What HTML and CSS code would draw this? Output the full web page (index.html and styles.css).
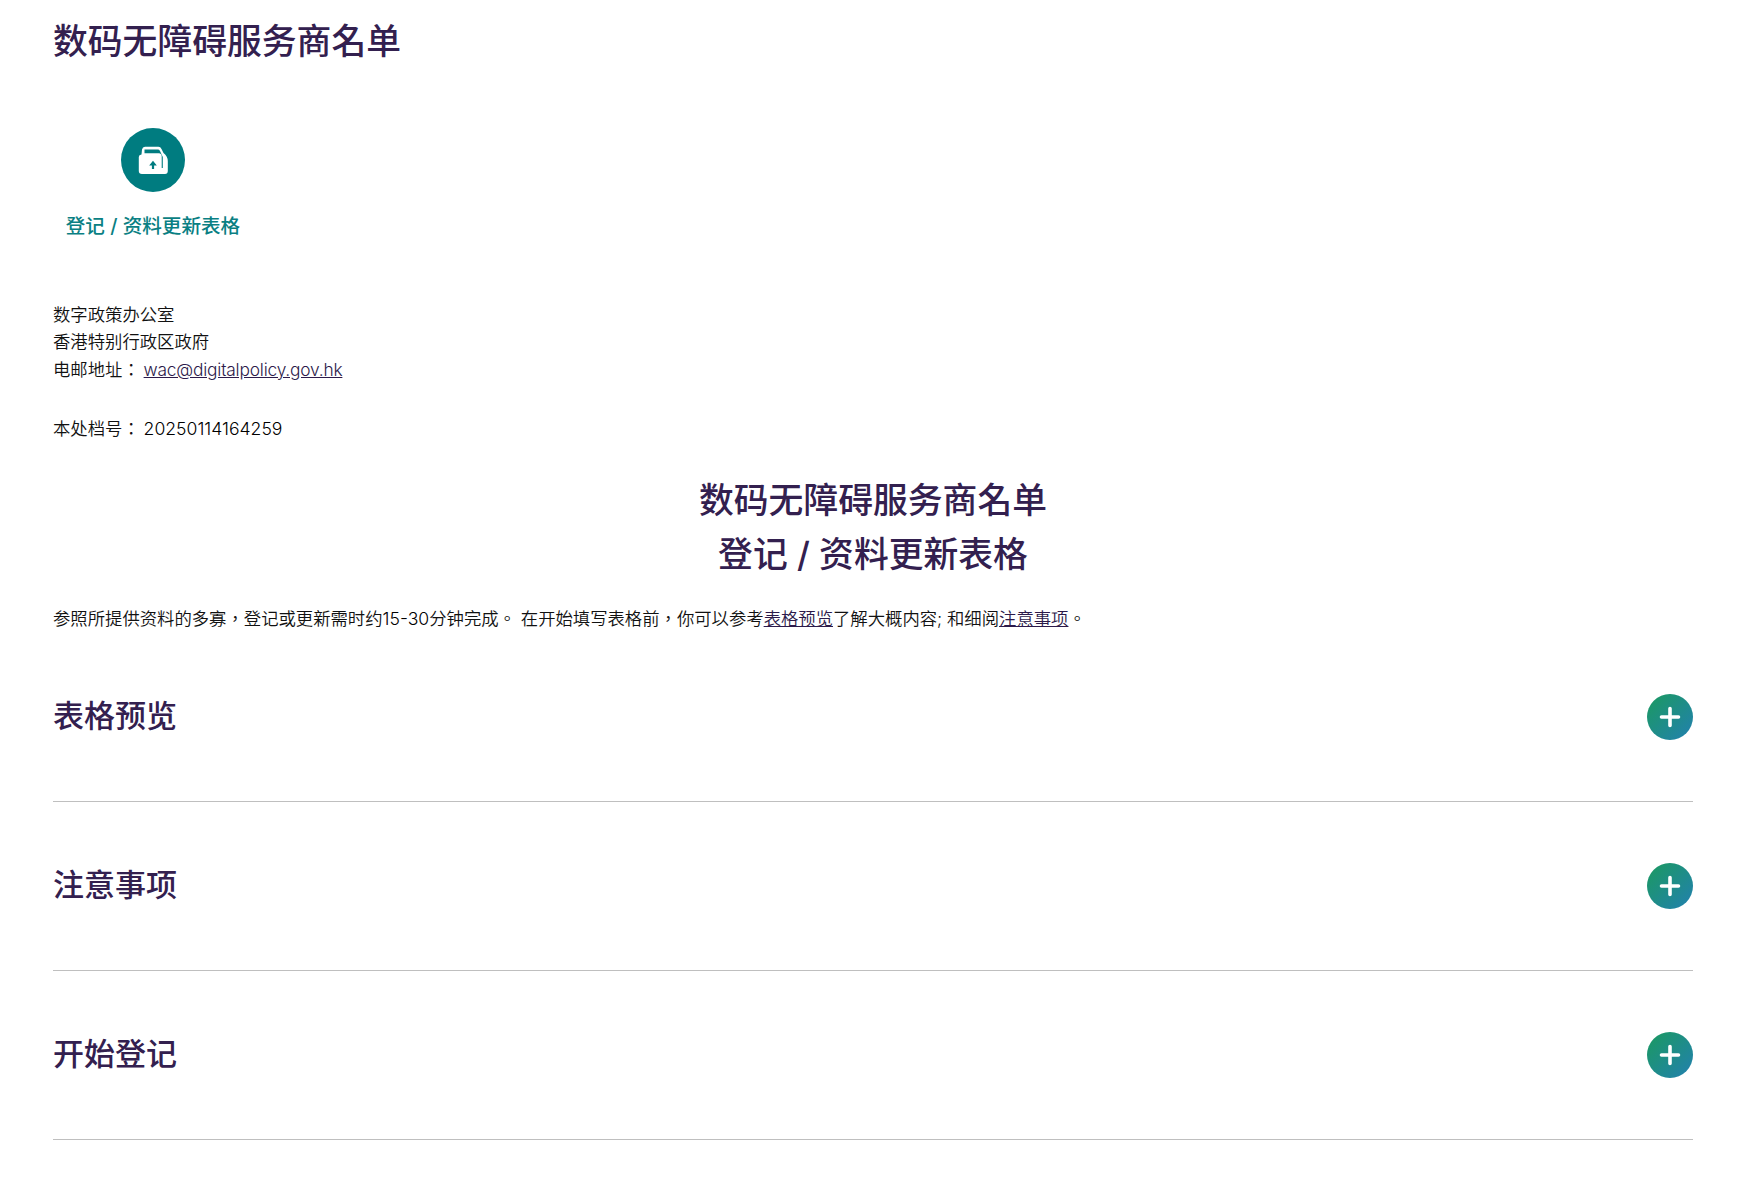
FILE: index.html
```html
<!DOCTYPE html>
<html lang="zh-HK">
<head>
<meta charset="utf-8">
<title>数码无障碍服务商名单</title>
<link rel="stylesheet" href="styles.css">
</head>
<body>
<main class="page">
  <h1 class="page-title">数码无障碍服务商名单</h1>
  <a class="tile" href="#">
    <span class="tile-icon">
      <svg width="32" height="32" viewBox="0 0 32 32"><path fill="#fff" d="M5 5.500Q5.500 2.800 8 2.800H21.500Q23.500 2.800 24.500 5L26.500 9Q30.800 12.500 30.800 17V27Q30.800 30 28 30H5Q1.800 30 1.800 27V13Q1.800 10.800 4.500 10.500Z"/><path fill="#007c80" d="M7.500 9.200V5.400H21.300Q22.400 5.400 23 7L25.800 13V24H24.700V12Q24.300 9.200 22 9.200Z"/><path fill="#007c80" d="M14.900 25h2.200V21.400h2.700L16 16.800l-3.800 4.600h2.700z"/></svg>
    </span>
    <span class="tile-label">登记 / 资料更新表格</span>
  </a>
  <address class="contact">
    数字政策办公室<br>
    香港特别行政区政府<br>
    电邮地址： <a class="email" href="#">wac@digitalpolicy.gov.hk</a>
  </address>
  <p class="ref">本处档号： <span class="num num-ref">20250114164259</span></p>
  <h2 class="form-title">数码无障碍服务商名单<br>登记 / 资料更新表格</h2>
  <p class="intro">参照所提供资料的多寡，登记或更新需时约<span class="num">15-30</span>分钟完成。 在开始填写表格前，你可以参考<a href="#">表格预览</a>了解大概内容; 和细阅<a href="#">注意事项</a>。</p>
  <section class="accordion">
    <div class="acc-row"><h3>表格预览</h3><span class="plus"><svg width="22" height="22" viewBox="0 0 22 22"><path d="M11 2.500v17M2.500 11h17" stroke="#fff" stroke-width="3.600" stroke-linecap="round"/></svg></span></div>
    <div class="acc-row"><h3>注意事项</h3><span class="plus"><svg width="22" height="22" viewBox="0 0 22 22"><path d="M11 2.500v17M2.500 11h17" stroke="#fff" stroke-width="3.600" stroke-linecap="round"/></svg></span></div>
    <div class="acc-row"><h3>开始登记</h3><span class="plus"><svg width="22" height="22" viewBox="0 0 22 22"><path d="M11 2.500v17M2.500 11h17" stroke="#fff" stroke-width="3.600" stroke-linecap="round"/></svg></span></div>
  </section>
</main>
</body>
</html>
```

FILE: styles.css
```css
* { box-sizing: border-box; }
html, body { margin: 0; background: #fff; }
body {
  font-family: Inter, "Noto Sans CJK TC", sans-serif;
  font-size: 17.350px;
  line-height: 27.300px;
  font-weight: 350;
  color: #111;
}
a { color: #2c1a4a; text-decoration: underline; }
.num { font-size: 17.600px; color: #000; }
.num-ref { margin-left: -1px; }
.email { letter-spacing: -0.2px; margin-left: -1px; }
.page { padding: 0 52px 0 53px; height: 1193px; overflow: hidden; }
.page-title {
  margin: 0;
  padding-top: 19px;
  font-size: 34.800px;
  line-height: 45px;
  font-weight: 500;
  color: #33204f;
}
.tile {
  display: flex;
  flex-direction: column;
  align-items: center;
  width: 200px;
  margin-top: 64px;
  text-decoration: none;
}
.tile-icon {
  display: flex;
  align-items: center;
  justify-content: center;
  width: 64px;
  height: 64px;
  border-radius: 50%;
  background: #007c80;
}
.tile-label {
  margin-top: 21px;
  font-size: 19.600px;
  line-height: 26px;
  font-weight: 500;
  color: #0a7f83;
}
.contact { margin-top: 62px; font-style: normal; }
.ref { margin: 32px 0 0; }
.form-title {
  margin: 32px 0 0;
  text-align: center;
  font-size: 34.800px;
  line-height: 53.500px;
  font-weight: 500;
  color: #33204f;
}
.intro { margin: 24px 0 0; }
.accordion { margin-top: 1px; }
.acc-row {
  display: flex;
  align-items: center;
  justify-content: space-between;
  height: 169px;
  border-bottom: 1px solid #bfbfbf;
}
.acc-row h3 {
  margin: 0 0 2px;
  font-size: 31px;
  line-height: 40px;
  font-weight: 500;
  color: #33204f;
}
.plus {
  display: flex;
  align-items: center;
  justify-content: center;
  width: 46px;
  height: 46px;
  border-radius: 50%;
  background: linear-gradient(135deg, #1b9a5f, #2280b0);
}
```
